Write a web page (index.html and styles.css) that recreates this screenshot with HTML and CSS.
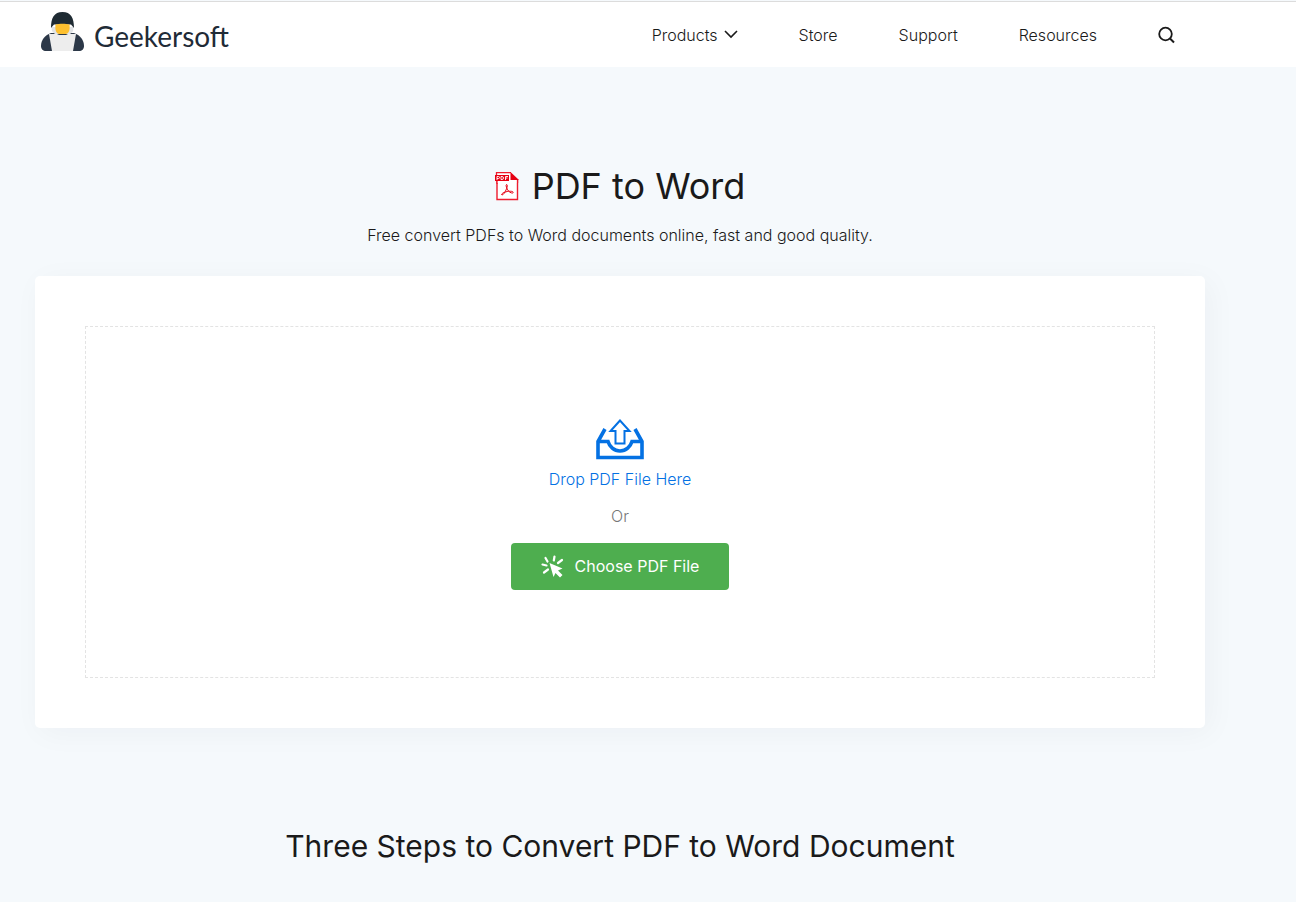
FILE: index.html
```html
<!DOCTYPE html>
<html lang="en">
<head>
    <meta charset="UTF-8">
    <meta name="viewport" content="width=device-width, initial-scale=1.0">
    <title>PDF to Word - Geekersoft</title>
    <link rel="stylesheet" href="styles.css">
</head>
<body>
    <header class="header">
        <a class="logo" href="#">
            <svg class="logo-icon" width="43" height="39" viewBox="0 0 43 39" aria-hidden="true">
                <path d="M10 21C4 23 0 28 0 34c0 3 2 5 5 5h33c3 0 5-2 5-5 0-6-4-11-10-13z" fill="#2c3848"/>
                <path d="M11 15c-1 3 0 5 3 7h15c3-2 4-4 3-7z" fill="#e2e4e6"/>
                <path d="M10 16C10 6 13 0 21.500 0S33 6 33 16l-3-3.500H13z" fill="#1f2b33"/>
                <path d="M14.500 12.500c4-1 10-1 14 0 .5 4 0 9.500-4 9.500h-6c-4 0-4.500-5.500-4-9.500z" fill="#fdc02f"/>
                <path d="M8 22h8l2 1h7l2-1h8l-3 17H11z" fill="#ededed"/>
            </svg>
            <span class="logo-text">Geekersoft</span>
        </a>
        <nav class="nav">
            <a href="#">Products
                <svg width="14" height="9" viewBox="0 0 14 9" aria-hidden="true">
                    <path d="M1 1l6 6 6-6" fill="none" stroke="#1a1a1a" stroke-width="1.600"/>
                </svg>
            </a>
            <a href="#">Store</a>
            <a href="#">Support</a>
            <a href="#">Resources</a>
            <button class="search-btn" type="button" aria-label="Search">
                <svg width="18" height="18" viewBox="0 0 18 18" aria-hidden="true">
                    <circle cx="7.500" cy="8" r="6.300" fill="none" stroke="#1a1a1a" stroke-width="1.800"/>
                    <path d="M12 12.500l4 4" stroke="#1a1a1a" stroke-width="2"/>
                </svg>
            </button>
        </nav>
    </header>

    <main class="main">
        <h1 class="title">
            <svg width="24" height="29" viewBox="0 0 24 29" aria-hidden="true">
                <path d="M2 8v19.500h20.500V8" fill="#fff" stroke="#ee1c2e" stroke-width="1.400"/>
                <path d="M2 1h14l6.500 7v3H2z" fill="#fff"/>
                <path d="M1.500 3V.700H16M22.500 7v4M2 8v4" fill="none" stroke="#ee1c2e" stroke-width="1.300"/>
                <path d="M15.500 0L24 8h-8.500z" fill="#e60012"/>
                <path d="M0 3h14v6H0z" fill="#e60012"/>
                <path d="M2 8V4.500h1.500q1 0 1 1t-1 1H2M6 4.500v3h1q1.500 0 1.500-1.500T7 4.500zM10.500 8V4.500H13M10.500 6h2" fill="none" stroke="#fff" stroke-width=".9"/>
                <path d="M11.500 12.500c1.500 0 .5 3.500-.5 5.500-1 2-2.500 5-4 5-1.500-.500 1-2.500 4-3.200 3-.8 7-.8 7.200.5.200 1.500-3 .7-4.700-1.300-1.700-2-3.200-6-2-6.500z" fill="none" stroke="#e60012"/>
            </svg>
            PDF to Word
        </h1>
        <p class="subtitle">Free convert PDFs to Word documents online, fast and good quality.</p>

        <section class="card">
            <div class="drop-zone">
                <svg width="48" height="41" viewBox="0 0 48 41" aria-hidden="true">
                    <path d="M9 10L2 22.500V38.500h44V22.500L39 10M2 22.500h10c1.500 5 6 9.500 12 9.500s10.500-4.500 12-9.500h10" fill="none" stroke="#0471e3" stroke-width="3.600"/>
                    <path d="M24 1.500L14.500 12h5v12.500h9V12h5z" fill="#fff" stroke="#0471e3" stroke-width="2"/>
                </svg>
                <p class="drop-text">Drop PDF File Here</p>
                <p class="or-text">Or</p>
                <button class="choose-btn" type="button">
                    <svg width="24" height="23" viewBox="0 0 24 23" aria-hidden="true">
                        <path d="M8.500 8l13 5.500-4.500 2 4.500 4.500-2.500 2.500-4.500-4.500-2 4z" fill="#fff"/>
                        <path d="M6.500 6.500L4.500 3M12.800 5.500L13.500 1.500M17 8l4-3M5.500 10.500L1.500 9.500M7 14.500l-4 3" stroke="#fff" stroke-width="2.200" stroke-linecap="round"/>
                    </svg>
                    Choose PDF File
                </button>
            </div>
        </section>

        <h2 class="steps-title">Three Steps to Convert PDF to Word Document</h2>
    </main>
</body>
</html>
```
FILE: styles.css
```css
* {
    box-sizing: border-box;
}
body {
    margin: 0;
    padding-top: 1px;
    font-family: Inter, sans-serif;
    font-size: 16px;
    font-weight: 300;
    line-height: 24px;
    color: #1a1a1a;
    background: #f5f9fc;
}
h1, h2, p {
    margin: 0;
}
a {
    color: inherit;
    text-decoration: none;
}
button {
    border: 0;
    font-family: inherit;
    cursor: pointer;
}
svg {
    display: block;
    flex-shrink: 0;
}
.header {
    display: flex;
    align-items: center;
    justify-content: space-between;
    height: 66px;
    padding: 0 120px 0 41px;
    border-top: 1px solid #dcdcdc;
    background: #fff;
}
.logo {
    display: flex;
    align-items: center;
    gap: 10px;
    padding-bottom: 6px;
}
.logo-text {
    padding-top: 8px;
    font-family: Lato, sans-serif;
    font-size: 28px;
    font-weight: 400;
    color: #1f2b37;
}
.nav {
    display: flex;
    align-items: center;
    gap: 61px;
}
.nav a {
    display: flex;
    align-items: center;
    gap: 6px;
}
.search-btn {
    padding: 0;
    background: none;
}
.main {
    padding: 92px 91px 32px 35px;
    text-align: center;
}
.title {
    display: flex;
    align-items: center;
    justify-content: center;
    gap: 13px;
    font-size: 36px;
    font-weight: 400;
    line-height: 54px;
}
.subtitle {
    margin-top: 10px;
}
.card {
    margin-top: 29px;
    padding: 50px;
    border-radius: 5px;
    background: #fff;
    box-shadow: 5px 5px 30px rgba(0, 30, 60, 0.04);
}
.drop-zone {
    display: flex;
    flex-direction: column;
    align-items: center;
    padding: 92px 20px 87px;
    border: 1px dashed #e3e3e3;
}
.drop-text {
    margin-top: 7px;
    color: #0471e3;
}
.or-text {
    margin-top: 13px;
    color: #777;
}
.choose-btn {
    display: flex;
    align-items: center;
    gap: 10px;
    margin-top: 15px;
    padding: 12px 30px;
    border-radius: 4px;
    font-size: 16px;
    font-weight: 400;
    line-height: 23px;
    color: #fff;
    background: #4eae4f;
}
.steps-title {
    margin-top: 96px;
    font-size: 30px;
    font-weight: 400;
    line-height: 45px;
}
```
